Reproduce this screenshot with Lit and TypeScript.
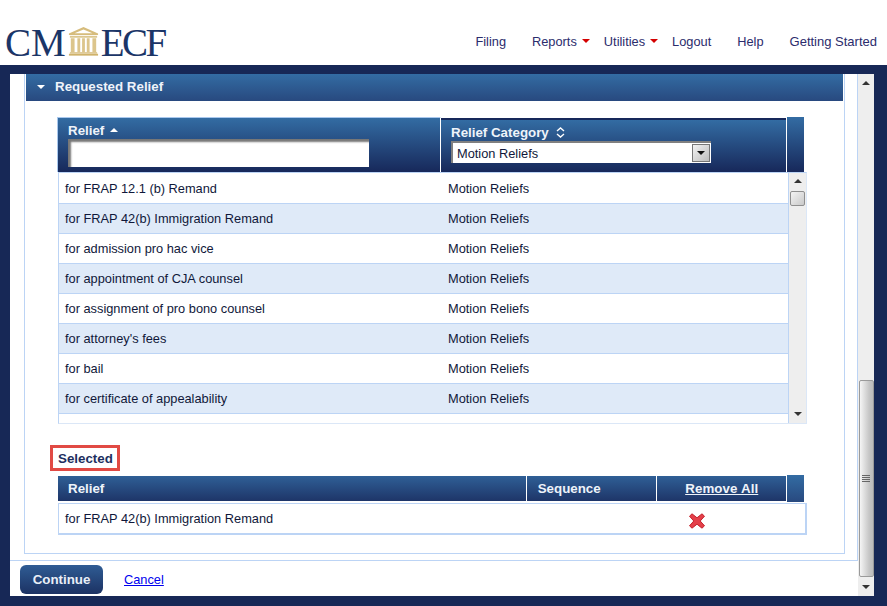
import { LitElement, html, css, svg } from "lit";
import { customElement } from "lit/decorators.js";

const RELIEFS = [
  "for FRAP 12.1 (b) Remand",
  "for FRAP 42(b) Immigration Remand",
  "for admission pro hac vice",
  "for appointment of CJA counsel",
  "for assignment of pro bono counsel",
  "for attorney's fees",
  "for bail",
  "for certificate of appealability",
];

const temple = svg`<svg class="temple" width="31" height="30" viewBox="0 0 33 32" preserveAspectRatio="none">
  <path d="M16.5 1 L32 8 V9.5 H1 V8 Z M16.5 3.6 L7 7.8 H26 Z" fill="#d6bc7c" fill-rule="evenodd"/>
  <rect x="2" y="10.5" width="29" height="2" fill="#dcc68e"/>
  <path d="M3 13h4v15H3zM10 13h3v15h-3zM15 13h3v15h-3zM20 13h3v15h-3zM26 13h4v15h-4z" fill="#dcc58c"/>
  <rect x="2" y="28" width="29" height="1.4" fill="#d6bc7c"/>
  <rect x="1" y="29.6" width="31" height="2" fill="#cfb26a"/>
</svg>`;

const xIcon = svg`<svg width="18" height="16" viewBox="0 0 18 16">
  <path d="M1.5 3.2 L4 .8 L9 4.8 L14 .8 L16.5 3.2 L12.2 8 L16.5 12.8 L14 15.2 L9 11.2 L4 15.2 L1.5 12.8 L5.8 8 Z" fill="#e4404a" stroke="#c4222c" stroke-width="1"/>
</svg>`;

const sortBoth = svg`<svg class="sort-both" width="9" height="11" viewBox="0 0 9 11">
  <path d="M1 4 L4.5 1 L8 4 M1 7 L4.5 10 L8 7" fill="none" stroke="#fff" stroke-width="1.4"/>
</svg>`;

@customElement("app-root")
export class AppRoot extends LitElement {
  static styles = css`
    :host { display: block; width: 887px; height: 606px; overflow: hidden; background: #fff;
      font-family: "Liberation Sans", Arial, sans-serif; font-size: 12.8px; color: #10183a; }
    * { box-sizing: border-box; }
    .top { height: 65px; display: flex; justify-content: space-between; background: #fff; }
    .logo { display: flex; align-items: flex-start; padding: 26px 0 0 5px; font-family: "Liberation Serif", serif;
      font-size: 39px; line-height: 34px; color: #1b3567; }
    .logo .ecf { letter-spacing: -2.5px; margin-left: 2px; }
    .temple { margin: 0 0 0 2px; flex: none; display: block; }
    .nav { display: flex; align-items: flex-start; padding: 34px 10px 0 0; font-size: 12.8px; line-height: 15px; color: #2b2c6c; }
    .nav span { margin-left: 26px; white-space: nowrap; }
    .nav span.first { margin-left: 0; }
    .nav span.tight { margin-left: 14px; }
    .nav span.last { font-size: 13px; }
    .nav i { display: inline-block; width: 0; height: 0; margin: 0 0 3px 5px; vertical-align: middle;
      border-left: 4px solid transparent; border-right: 4px solid transparent; border-top: 4px solid #d40000; }

    .frame { height: 541px; background: #172856; padding: 9px 13px 10px 10px; display: flex; }
    .main { width: 848px; background: #fff; display: flex; flex-direction: column; }
    .scrollarea { height: 487px; border-right: 1px solid #bcd4f5; border-bottom: 1px solid #bcd4f5; padding: 0 12px 6px 14px; }
    .section { height: 480px; border: 1px solid #bcd4f5; border-top: none; }
    .section-head { height: 27px; margin: 0 0 0 1px; width: 817px; display: flex; align-items: center; gap: 10px; padding: 0 0 2px 11px;
      background: linear-gradient(#336ca3, #28497f); color: #eef3fa; font-weight: bold; font-size: 13.33px; }
    .tri-down { width: 0; height: 0; border-left: 4.5px solid transparent; border-right: 4.5px solid transparent; border-top: 4px solid #fff; }

    .content { padding: 16px 0 0 32px; }
    .thead { display: flex; height: 55px; width: 748px; }
    .th-relief { width: 384px; border: 1px solid #a9c8ee; border-width: 1px 0 0 1px; padding: 5px 0 0 10px; border-right: 1px solid #fff;
      background: linear-gradient(#336ca3, #17285a); }
    .th-cat { width: 346px; margin-top: 1px; padding: 7px 0 0 10px; border-right: 1px solid #fff;
      background: linear-gradient(#17285a 0 2px, #336ca3 2px, #17285a); }
    .th-end { width: 17px; background: linear-gradient(#336ca3, #17285a); }
    .th-title { color: #eef3fa; font-weight: bold; font-size: 13.33px; line-height: 15px; display: flex; align-items: center; gap: 6px; }
    .search { display: block; width: 301px; height: 28px; margin-top: 1px; background: #fff; border: 0; outline: 0;
      box-shadow: inset 3px 3px 2px #777; }
    .select { display: flex; justify-content: space-between; align-items: center; width: 260px; height: 22px; margin-top: 1px; background: #fff;
      border-top: 2px solid #808080; border-left: 2px solid #808080; padding-left: 4px; color: #10183a; }
    .select-btn { width: 18px; height: 18px; margin-right: 1px; border: 1px solid #777; background: linear-gradient(135deg, #f2f2f2, #bdbdbd);
      display: flex; align-items: center; justify-content: center; }
    .tri-dark { width: 0; height: 0; border-left: 4px solid transparent; border-right: 4px solid transparent; border-top: 4px solid #111; }
    .sort-up { width: 0; height: 0; border-left: 4px solid transparent; border-right: 4px solid transparent; border-bottom: 4px solid #fff; margin-top: -1px; }
    .sort-both { display: block; margin-left: 1px; }

    .list { display: flex; width: 749px; height: 252px; margin: 0 0 0 1px; border: 1px solid #dbe7f7; border-top: 1px solid #bcd4f5; border-left: 1px solid #bcd4f5; overflow: hidden; }
    .rows { width: 730px; border-right: 1px solid #bcd4f5; overflow: hidden; padding-top: 1px; flex: none; }
    .row { height: 30px; display: grid; grid-template-columns: 383px 1fr; align-items: center; padding-left: 6px; border-bottom: 1px solid #bcd4f5; }
    .row.even { background: #dfeaf8; }
    .sb { width: 17px; flex: none; background: #eeeeee; display: flex; flex-direction: column; align-items: center; }
    .sb .up, .sb .down { width: 0; height: 0; flex: none; border-left: 4px solid transparent; border-right: 4px solid transparent; }
    .sb .up { border-bottom: 4px solid #333; margin-top: 6px; }
    .sb .down { border-top: 4px solid #333; margin-bottom: 7px; margin-top: auto; }
    .sb .thumb { width: 15px; height: 15px; margin-top: 8px; border: 1px solid #8f8f8f; border-radius: 2px; background: linear-gradient(135deg, #f4f4f4, #c9c9c9); }

    .selected-wrap { display: flex; margin: 21px 0 4px -7px; }
    .selected { height: 26px; width: 70px; border: 3px solid #e14a44; display: flex; align-items: center; padding-left: 5px;
      font-weight: bold; font-size: 13.33px; color: #1d2f5f; }
    .s-head { display: flex; height: 28px; width: 747px; }
    .s-head div { height: 25px; margin-top: 1px; background: linear-gradient(#2f5f96, #1e3568); color: #eef3fa; font-weight: bold; font-size: 13.33px;
      display: flex; align-items: center; border-right: 1px solid #fff; }
    .s-relief { width: 470px; padding-left: 10px; margin-left: 1px; }
    .s-seq { width: 131px; padding-left: 11px; }
    .s-rem { width: 130px; justify-content: center; }
    .s-rem a { color: #eef3fa; text-decoration: underline; letter-spacing: 0.1px; }
    .s-head div.s-end { width: 17px; height: 27px; margin: 0; border: 0; background: linear-gradient(#336ca3, #28497f); }
    .s-row { display: flex; align-items: center; justify-content: space-between; width: 749px; height: 32px; margin: 0 0 0 1px;
      border: 1px solid #bcd4f5; border-width: 1px 2px 2px 1px; padding: 0 99px 0 6px; }
    .s-row svg { display: block; margin-top: 5px; }

    .footer { height: 35px; display: flex; align-items: flex-start; padding: 4px 0 0 10px; gap: 21px; }
    .btn { width: 83px; height: 29px; border-radius: 6px; border: 0; padding: 0; background: linear-gradient(#2f5c94, #1c3263); color: #e9eff7;
      font: bold 13.33px "Liberation Sans", Arial, sans-serif; }
    .cancel { color: #0000ee; text-decoration: underline; line-height: 29px; }

    .pagebar { width: 16px; flex: none; background: #eeeeee; display: flex; flex-direction: column; align-items: center; }
    .pagebar .up, .pagebar .down { width: 0; height: 0; flex: none; border-left: 4px solid transparent; border-right: 4px solid transparent; }
    .pagebar .up { border-bottom: 4px solid #333; margin-top: 7px; }
    .pagebar .thumb { width: 15px; height: 197px; margin-top: 295px; border: 1px solid #9a9a9a; border-radius: 2px;
      background: linear-gradient(90deg, #f5f5f5, #c6c6c6 70%, #bbb); display: flex; flex-direction: column; justify-content: center; align-items: center; gap: 1px; }
    .pagebar .thumb b { display: block; width: 8px; height: 1px; background: #666; }
    .pagebar .down { border-top: 4px solid #333; margin-top: 8px; }
  `;

  render() {
    return html`
      <div class="top">
        <div class="logo"><span>CM</span>${temple}<span class="ecf">ECF</span></div>
        <div class="nav">
          <span class="first">Filing</span>
          <span>Reports<i></i></span>
          <span class="tight">Utilities<i></i></span>
          <span class="tight">Logout</span>
          <span>Help</span>
          <span class="last">Getting Started</span>
        </div>
      </div>
      <div class="frame">
        <div class="main">
          <div class="scrollarea">
            <div class="section">
              <div class="section-head"><span class="tri-down"></span>Requested Relief</div>
              <div class="content">
                <div class="thead">
                  <div class="th-relief">
                    <div class="th-title">Relief <span class="sort-up"></span></div>
                    <input class="search" type="text" />
                  </div>
                  <div class="th-cat">
                    <div class="th-title">Relief Category ${sortBoth}</div>
                    <div class="select">Motion Reliefs<span class="select-btn"><span class="tri-dark"></span></span></div>
                  </div>
                  <div class="th-end"></div>
                </div>
                <div class="list">
                  <div class="rows">
                    ${RELIEFS.map(
                      (r, i) => html`<div class="row ${i % 2 ? "even" : ""}"><span>${r}</span><span>Motion Reliefs</span></div>`
                    )}
                  </div>
                  <div class="sb"><span class="up"></span><span class="thumb"></span><span class="down"></span></div>
                </div>
                <div class="selected-wrap"><div class="selected">Selected</div></div>
                <div class="s-head">
                  <div class="s-relief">Relief</div>
                  <div class="s-seq">Sequence</div>
                  <div class="s-rem"><a>Remove All</a></div>
                  <div class="s-end"></div>
                </div>
                <div class="s-row"><span>for FRAP 42(b) Immigration Remand</span>${xIcon}</div>
              </div>
            </div>
          </div>
          <div class="footer">
            <button class="btn">Continue</button>
            <a class="cancel">Cancel</a>
          </div>
        </div>
        <div class="pagebar">
          <span class="up"></span>
          <div class="thumb"><b></b><b></b><b></b><b></b></div>
          <span class="down"></span>
        </div>
      </div>
    `;
  }
}
